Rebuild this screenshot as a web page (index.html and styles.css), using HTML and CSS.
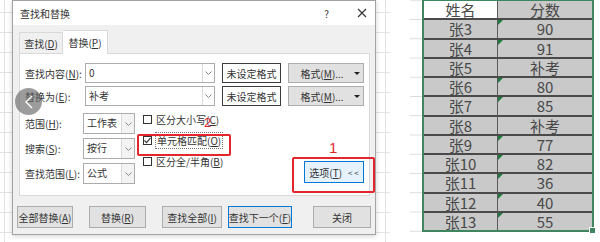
FILE: index.html
```html
<!DOCTYPE html>
<html lang="zh-CN">
  <head>
    <meta charset="utf-8">
    <title>查找和替换</title>
    <link rel="stylesheet" href="styles.css">
  </head>
  <body>
    <div class="page">
      <div class="leftPane">
        <div class="dialog">
          <div class="titleBar">
            <span class="title">查找和替换</span>
            <span class="tbHelp">?</span>
            <svg class="tbClose" width="10" height="10" viewBox="0 0 10 10"><path d="M1 1L9 9M9 1L1 9" stroke="#333" stroke-width="1.1"/></svg>
          </div>

          <div class="tabs">
            <div class="tab">查找(<u>D</u>)</div>
            <div class="tab tabActive">替换(<u>P</u>)</div>
          </div>

          <div class="panel">
            <div class="fieldRow">
              <span class="fieldLabel">查找内容(<u>N</u>):</span>
              <div class="combo comboWide">
                <span class="comboText">0</span>
                <span class="comboDrop"><svg width="7" height="4" viewBox="0 0 7 4"><polyline points="0.5,0.5 3.5,3.5 6.5,0.5" fill="none" stroke="#8a8a8a"/></svg></span>
              </div>
              <div class="fmtPreview">未设定格式</div>
              <div class="btn fmtBtn">格式(<u>M</u>)...<span class="caret"></span></div>
            </div>

            <div class="fieldRow">
              <span class="fieldLabel">替换为(<u>E</u>):</span>
              <div class="combo comboWide">
                <span class="comboText">补考</span>
                <span class="comboDrop"><svg width="7" height="4" viewBox="0 0 7 4"><polyline points="0.5,0.5 3.5,3.5 6.5,0.5" fill="none" stroke="#8a8a8a"/></svg></span>
              </div>
              <div class="fmtPreview">未设定格式</div>
              <div class="btn fmtBtn">格式(<u>M</u>)...<span class="caret"></span></div>
            </div>

            <div class="optArea">
              <div class="optGrid">
                <span class="fieldLabel">范围(<u>H</u>):</span>
                <div class="combo comboSmall">
                  <span class="comboText">工作表</span>
                  <span class="comboDrop"><svg width="7" height="4" viewBox="0 0 7 4"><polyline points="0.5,0.5 3.5,3.5 6.5,0.5" fill="none" stroke="#8a8a8a"/></svg></span>
                </div>
                <span class="fieldLabel">搜索(<u>S</u>):</span>
                <div class="combo comboSmall">
                  <span class="comboText">按行</span>
                  <span class="comboDrop"><svg width="7" height="4" viewBox="0 0 7 4"><polyline points="0.5,0.5 3.5,3.5 6.5,0.5" fill="none" stroke="#8a8a8a"/></svg></span>
                </div>
                <span class="fieldLabel">查找范围(<u>L</u>):</span>
                <div class="combo comboSmall">
                  <span class="comboText">公式</span>
                  <span class="comboDrop"><svg width="7" height="4" viewBox="0 0 7 4"><polyline points="0.5,0.5 3.5,3.5 6.5,0.5" fill="none" stroke="#8a8a8a"/></svg></span>
                </div>
              </div>

              <div class="checks">
                <div class="check"><span class="box"></span>区分大小写(<u>C</u>)</div>
                <div class="check">
                  <span class="box"><svg width="7" height="7" viewBox="0 0 7 7"><polyline points="0.5,3.5 2.6,5.6 6.5,0.8" fill="none" stroke="#333" stroke-width="1.1"/></svg></span>
                  <span class="focusText">单元格匹配(<u>O</u>)</span>
                </div>
                <div class="check"><span class="box"></span>区分全/半角(<u>B</u>)</div>
              </div>

              <div class="btn optBtn">选项(<u>T</u>)<span class="chev">&lt; &lt;</span></div>
            </div>
          </div>

          <div class="footer">
            <div class="btn fbtn fbReplaceAll">全部替换(<u>A</u>)</div>
            <div class="btn fbtn fbReplace">替换(<u>R</u>)</div>
            <div class="btn fbtn fbFindAll">查找全部(<u>I</u>)</div>
            <div class="btn fbtn fbFindNext">查找下一个(<u>F</u>)</div>
            <div class="btn fbtn fbClose">关闭</div>
          </div>
        </div>

        <!-- overlays on top of the screenshot -->
        <div class="navCircle"><svg width="10" height="14" viewBox="0 0 10 14"><polyline points="8,1 2,7 8,13" fill="none" stroke="#fff" stroke-width="1.4"/></svg></div>
        <div class="mark markMatch"></div>
        <span class="markNum markNum2">2</span>
        <div class="mark markOpt"></div>
        <span class="markNum markNum1">1</span>
      </div>

      <div class="rightPane">
        <div class="sheet">
          <div class="cell nameCol headCell">姓名</div><div class="cell">分数</div>
          <div class="cell nameCol">张3</div><div class="cell txtNum">90</div>
          <div class="cell nameCol">张4</div><div class="cell txtNum">91</div>
          <div class="cell nameCol">张5</div><div class="cell">补考</div>
          <div class="cell nameCol">张6</div><div class="cell txtNum">80</div>
          <div class="cell nameCol">张7</div><div class="cell txtNum">85</div>
          <div class="cell nameCol">张8</div><div class="cell">补考</div>
          <div class="cell nameCol">张9</div><div class="cell txtNum">77</div>
          <div class="cell nameCol">张10</div><div class="cell txtNum">82</div>
          <div class="cell nameCol">张11</div><div class="cell txtNum">36</div>
          <div class="cell nameCol">张12</div><div class="cell txtNum">40</div>
          <div class="cell nameCol lastRow">张13</div><div class="cell txtNum lastRow">55</div>
        </div>
      </div>
    </div>
  </body>
</html>
```

FILE: styles.css
```css
* {
  box-sizing: border-box;
}

body {
  margin: 0;
  font-family: "Noto Sans CJK SC", "Noto Sans", sans-serif;
  font-size: 10px;
  color: #333;
  background: #fff;
}

u {
  text-underline-offset: 1px;
}

.page {
  display: flex;
  width: 600px;
  height: 242px;
  overflow: hidden;
}

/* ---- left: excel window with the dialog ---- */
.leftPane {
  position: relative;
  width: 390px;
  height: 242px;
  padding-left: 12px;
  background-color: #fff;
  background-image:
    linear-gradient(to bottom, #e3e3e3 1px, transparent 1px),
    linear-gradient(to right, #e3e3e3 1px, transparent 1px);
  background-size: 100% 20px, 381px 100%;
  background-position: 0 12px, 4px 0;
}

.dialog {
  width: 364px;
  height: 235px;
  border: 1px solid #a3a3a3;
  background: #f0f0f0;
  display: flex;
  flex-direction: column;
  box-shadow: 0 1px 5px rgba(0, 0, 0, 0.18);
}

.titleBar {
  height: 24px;
  background: #fff;
  display: flex;
  align-items: center;
  padding: 0 8px 0 7px;
}
.title {
  flex: 1;
}
.tbHelp {
  margin-right: 28px;
  font-size: 10px;
}

.tabs {
  height: 28px;
  display: flex;
  align-items: flex-end;
  padding-left: 6px;
}
.tab {
  width: 44px;
  height: 21px;
  border: 1px solid #d9d9d9;
  border-bottom: 0;
  display: flex;
  align-items: center;
  justify-content: center;
}
.tabActive {
  width: 45px;
  height: 24px;
  margin-bottom: -1px;
  border-left: 0;
  background: #fff;
  position: relative;
  z-index: 1;
}

.panel {
  width: 351px;
  height: 143px;
  margin-left: 6px;
  background: #fff;
  border: 1px solid #d9d9d9;
  padding: 9px 5px 0 5px;
}

.fieldRow {
  display: flex;
  align-items: center;
  height: 20px;
  margin-bottom: 3px;
}
.fieldRow .fieldLabel {
  width: 60px;
}

.combo {
  display: flex;
  height: 20px;
  border: 1px solid #acacac;
  background: #fff;
}
.comboText {
  flex: 1;
  padding-left: 3px;
  line-height: 18px;
  white-space: nowrap;
}
.comboDrop {
  width: 12px;
  border-left: 1px solid #dadada;
  background: #f3f3f3;
  display: flex;
  align-items: center;
  justify-content: center;
}
.comboWide {
  width: 130px;
  margin-right: 7px;
}
.comboWide .comboDrop {
  background: #fff;
}
.comboSmall {
  width: 52px;
  height: 21px;
}
.comboSmall .comboDrop {
  width: 13px;
}

.fmtPreview {
  width: 59px;
  height: 20px;
  margin-right: 7px;
  border: 1px solid #3c3c3c;
  background: #fff;
  display: flex;
  align-items: center;
  justify-content: center;
}

.btn {
  background: #e1e1e1;
  border: 1px solid #adadad;
  display: flex;
  align-items: center;
  justify-content: center;
  white-space: nowrap;
}
.fmtBtn {
  width: 76px;
  height: 20px;
  padding-left: 8px;
}
.caret {
  margin-left: 10px;
  border-left: 3px solid transparent;
  border-right: 3px solid transparent;
  border-top: 3px solid #222;
}

.optArea {
  display: flex;
  height: 76px;
  margin-top: 3px;
}
.optGrid {
  display: grid;
  grid-template-columns: 58px 52px;
  grid-auto-rows: 21px;
  row-gap: 4px;
  padding-top: 4px;
  align-items: center;
}

.checks {
  margin-left: 8px;
  display: flex;
  flex-direction: column;
  gap: 1px;
}
.check {
  display: flex;
  align-items: center;
  height: 20px;
  white-space: nowrap;
}
.box {
  width: 9px;
  height: 9px;
  margin-right: 4px;
  border: 1px solid #333;
  background: #fff;
  display: flex;
  align-items: center;
  justify-content: center;
}
.focusText {
  border: 1px dotted #777;
  padding: 0 1px;
  margin-left: -1px;
}

.optBtn {
  width: 60px;
  height: 22px;
  margin-left: auto;
  margin-bottom: 2px;
  align-self: flex-end;
  background: #e5f1fb;
  border-color: #0078d7;
}
.chev {
  margin-left: 6px;
  font-size: 8px;
}

.footer {
  display: flex;
  padding: 10px 0 0 4px;
}
.fbtn {
  height: 22px;
}
.fbReplaceAll {
  width: 56px;
  margin-right: 16px;
}
.fbReplace {
  width: 57px;
  margin-right: 16px;
}
.fbFindAll {
  width: 60px;
  margin-right: 6px;
}
.fbFindNext {
  width: 64px;
  margin-right: 21px;
  border-color: #0078d7;
}
.fbClose {
  width: 58px;
}

/* annotation overlays */
.navCircle {
  position: absolute;
  left: 15px;
  top: 88px;
  width: 27px;
  height: 27px;
  border-radius: 50%;
  background: rgba(95, 95, 95, 0.62);
  display: flex;
  align-items: center;
  justify-content: center;
}
.mark {
  position: absolute;
  border: 2px solid #e3262b;
  border-radius: 2px;
}
.markMatch {
  left: 137px;
  top: 134px;
  width: 94px;
  height: 22px;
}
.markOpt {
  left: 292px;
  top: 157px;
  width: 83px;
  height: 36px;
}
.markNum {
  position: absolute;
  color: #e3262b;
  font-family: "Liberation Sans", sans-serif;
  line-height: 1;
}
.markNum2 {
  left: 204px;
  top: 116px;
  font-size: 13px;
}
.markNum1 {
  left: 329px;
  top: 140px;
  font-size: 15px;
}

/* ---- right: the spreadsheet ---- */
.rightPane {
  width: 210px;
  height: 242px;
  padding-left: 32px;
  background-image: linear-gradient(to bottom, #dcdcdc 1px, transparent 1px);
  background-size: 12px 19.25px;
  background-position: 20px 19px;
  background-repeat: repeat-y;
}

.sheet {
  position: relative;
  width: 172px;
  display: grid;
  grid-template-columns: 74px 94px;
  grid-template-rows: repeat(11, 19.25px) 17.5px;
  border: 2px solid #3f8560;
  border-top-width: 1px;
}
.sheet::after {
  content: "";
  position: absolute;
  right: -4px;
  bottom: -4px;
  width: 5px;
  height: 5px;
  background: #3f8560;
  border: 1px solid #fff;
}

.cell {
  position: relative;
  background: #c9c9c9;
  border-bottom: 2px solid #4a4a4a;
  font-size: 15px;
  line-height: 17px;
  color: #484848;
  text-align: center;
}
.nameCol {
  border-right: 1px solid #5a5a5a;
}
.headCell {
  background: #fff;
}
.lastRow {
  border-bottom: 0;
}
.txtNum::before {
  content: "";
  position: absolute;
  left: 0;
  top: 0;
  border-top: 5px solid #1f7a3f;
  border-right: 5px solid transparent;
}
```
